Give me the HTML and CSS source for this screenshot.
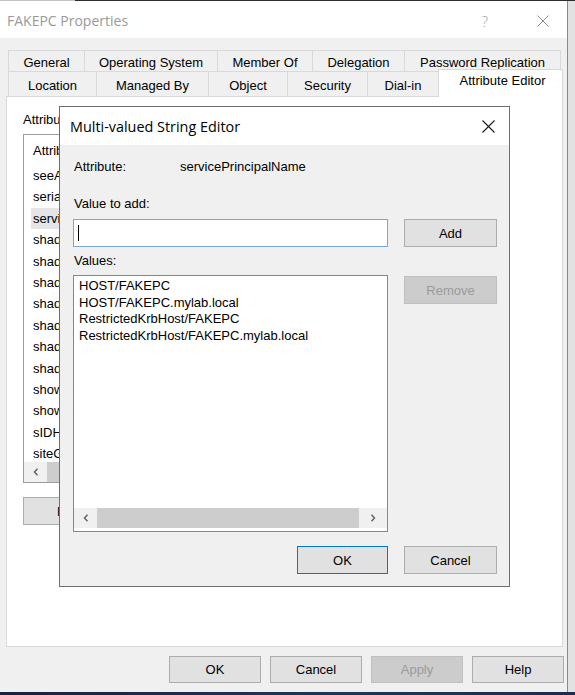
FILE: index.html
```html
<!DOCTYPE html>
<html>
<head>
<meta charset="utf-8">
<link rel="stylesheet" href="styles.css">
</head>
<body>
<div class="screen">
  <div class="topline"></div>
  <div class="main">
    <div class="window">
      <div class="titlebar">
        <span class="wtitle">FAKEPC Properties</span>
        <span class="capbtn help">?</span>
        <span class="capbtn close">
          <svg width="12" height="12" viewBox="0 0 12 12"><path d="M0.5 0.5 L11.5 11.5 M11.5 0.5 L0.5 11.5" stroke="#8e8e8e" stroke-width="1" fill="none"/></svg>
        </span>
      </div>
      <div class="tabs">
        <div class="tabrow back">
          <div class="tab t1">General</div>
          <div class="tab t2">Operating System</div>
          <div class="tab t3">Member Of</div>
          <div class="tab t4">Delegation</div>
          <div class="tab t5 last">Password Replication</div>
        </div>
        <div class="tabrow front">
          <div class="tab f1">Location</div>
          <div class="tab f2">Managed By</div>
          <div class="tab f3">Object</div>
          <div class="tab f4">Security</div>
          <div class="tab f5">Dial-in</div>
          <div class="tab f6 selected">Attribute Editor</div>
        </div>
      </div>
      <div class="panel">
        <div class="lbl">Attributes:</div>
        <div class="listview">
          <div class="lvhead">Attribute</div>
          <div class="lvitems">
            <div class="lvitem">seeAlso</div>
            <div class="lvitem">serialNumber</div>
            <div class="lvitem sel">servicePrincipalName</div>
            <div class="lvitem">shadowExpire</div>
            <div class="lvitem">shadowFlag</div>
            <div class="lvitem">shadowInactive</div>
            <div class="lvitem">shadowLastChange</div>
            <div class="lvitem">shadowMax</div>
            <div class="lvitem">shadowMin</div>
            <div class="lvitem">shadowWarning</div>
            <div class="lvitem">showInAddressBook</div>
            <div class="lvitem">showInAdvancedViewOnly</div>
            <div class="lvitem">sIDHistory</div>
            <div class="lvitem">siteGUID</div>
          </div>
          <div class="hscroll">
            <span class="arrow"><svg width="6" height="8" viewBox="0 0 6 8"><path d="M4.5 0.8 L1.5 4 L4.5 7.2" stroke="#606060" stroke-width="1.4" fill="none"/></svg></span>
            <span class="thumb wide"></span>
          </div>
        </div>
        <div class="backbtns">
          <div class="btn edit"><span class="editclip">E</span></div>
        </div>

        <div class="dialog">
          <div class="dtitlebar">
            <span class="dtitle">Multi-valued String Editor</span>
            <span class="dclose">
              <svg width="13" height="13" viewBox="0 0 13 13"><path d="M0.5 0.5 L12.5 12.5 M12.5 0.5 L0.5 12.5" stroke="#1a1a1a" stroke-width="1.1" fill="none"/></svg>
            </span>
          </div>
          <div class="dbody">
            <div class="arow">
              <span class="akey">Attribute:</span>
              <span class="aval">servicePrincipalName</span>
            </div>
            <div class="dlbl vadd">Value to add:</div>
            <div class="grid g1">
              <div class="input"><span class="caret"></span></div>
              <div class="btn">Add</div>
            </div>
            <div class="dlbl vals">Values:</div>
            <div class="grid g2">
              <div class="vlist">
                <div class="vitems">
                  <div class="vitem">HOST/FAKEPC</div>
                  <div class="vitem">HOST/FAKEPC.mylab.local</div>
                  <div class="vitem">RestrictedKrbHost/FAKEPC</div>
                  <div class="vitem">RestrictedKrbHost/FAKEPC.mylab.local</div>
                </div>
                <div class="hscroll vscr">
                  <span class="arrow"><svg width="6" height="8" viewBox="0 0 6 8"><path d="M4.5 0.8 L1.5 4 L4.5 7.2" stroke="#606060" stroke-width="1.4" fill="none"/></svg></span>
                  <span class="thumb"></span>
                  <span class="arrow right"><svg width="6" height="8" viewBox="0 0 6 8"><path d="M1.5 0.8 L4.5 4 L1.5 7.2" stroke="#606060" stroke-width="1.4" fill="none"/></svg></span>
                </div>
                <div class="vpad"></div>
              </div>
              <div class="btn disabled remove">Remove</div>
            </div>
            <div class="dfoot">
              <div class="btn default okd">OK</div>
              <div class="btn cancd">Cancel</div>
            </div>
          </div>
        </div>
      </div>
      <div class="footer">
        <div class="btn fbtn">OK</div>
        <div class="btn fbtn">Cancel</div>
        <div class="btn fbtn disabled">Apply</div>
        <div class="btn fbtn">Help</div>
      </div>
    </div>
    <div class="side"></div>
  </div>
  <div class="taskbar"></div>
</div>
</body>
</html>
```

FILE: styles.css
```css
* { box-sizing: border-box; }
html, body { margin: 0; padding: 0; }
body {
  width: 575px;
  height: 695px;
  overflow: hidden;
  font-family: "Liberation Sans", Arial, sans-serif;
  font-size: 13px;
  color: #000;
  background: #e4e4e4;
}
.screen { width: 575px; height: 695px; display: flex; flex-direction: column; }
.topline { height: 1px; flex: none; background: linear-gradient(to right, #c4c4c4 0, #c4c4c4 75px, #2c2c2c 75px); }
.main { flex: 1; display: flex; min-height: 0; }
.window {
  width: 568px;
  height: 691px;
  flex: none;
  background: #f0f0f0;
  border-right: 1px solid #8a8a8a;
  display: flex;
  flex-direction: column;
}
.side { flex: 1; background: #e2e2e2; }
.taskbar { height: 3px; flex: none; background: linear-gradient(to right, #17243c, #203659 60%, #1b2d4d); }

/* title bar */
.titlebar {
  height: 37px;
  flex: none;
  background: #fff;
  display: flex;
  align-items: center;
  padding-left: 7px;
  padding-right: 1px;
}
.wtitle { font-family: "Open Sans", "Noto Sans", sans-serif; font-size: 14px; color: #9a9a9a; margin-top: 2px; }
.capbtn { width: 46px; height: 30px; display: flex; align-items: center; justify-content: center; }
.help { margin-left: auto; font-family: "Open Sans", sans-serif; font-size: 15px; color: #a0a0a0; font-weight: 300; margin-top: 2px; }
.close { margin-left: 12px; margin-top: 2px; }

/* tabs */
.tabs { height: 58px; flex: none; padding-top: 12px; }
.tabrow { display: flex; align-items: flex-start; margin-left: 8px; }
.tabrow.back { height: 21px; }
.tabrow.front { height: 25px; }
.tab {
  border: 1px solid #d9d9d9;
  border-right: none;
  border-bottom: none;
  background: #f0f0f0;
  text-align: center;
  white-space: nowrap;
  flex: none;
}
.back .tab { height: 21px; line-height: 20px; padding-top: 2px; }
.front .tab { height: 25px; line-height: 24px; padding-top: 2px; }
.tab.last { border-right: 1px solid #d9d9d9; }
.t1 { width: 76px; }
.t2 { width: 133px; }
.t3 { width: 95px; }
.t4 { width: 92px; }
.t5 { width: 157px; }
.f1 { width: 88px; }
.f2 { width: 112px; }
.f3 { width: 79px; }
.f4 { width: 80px; }
.f5 { width: 71px; }
.front .tab.selected {
  width: 125px;
  height: 28px;
  margin-top: -2px;
  background: #fff;
  border-right: 1px solid #d9d9d9;
  position: relative;
  z-index: 2;
  line-height: 22px;
  padding-top: 0;
  padding-left: 4px;
}

/* panel */
.panel {
  position: relative;
  margin-left: 6px;
  width: 557px;
  height: 551px;
  flex: none;
  background: #fff;
  border: 1px solid #d9d9d9;
  padding: 15px 0 0 16px;
}
.lbl { line-height: 16px; width: 36px; overflow: hidden; white-space: nowrap; }
.listview {
  margin-top: 6px;
  width: 420px;
  height: 349px;
  border: 1px solid #9c9c9c;
  display: flex;
  flex-direction: column;
}
.lvhead { height: 30px; line-height: 31px; padding-left: 9px; flex: none; width: 35px; overflow: hidden; white-space: nowrap; }
.lvitems { flex: 1; overflow: hidden; width: 35px; }
.lvitem { height: 21.4px; line-height: 22px; padding-left: 9px; white-space: nowrap; overflow: hidden; }
.lvitem.sel { background: #e5e5e5; margin-left: 7px; padding-left: 2px; }
.hscroll { height: 20px; flex: none; display: flex; background: #f0f0f0; }
.hscroll .arrow { width: 23px; flex: none; display: flex; align-items: center; justify-content: center; }
.hscroll .thumb { background: #cdcdcd; flex: none; }
.hscroll .thumb.wide { width: 300px; }
.backbtns { margin-top: 14px; display: flex; }
.btn.edit { width: 88px; height: 28px; justify-content: flex-start; padding-left: 33px; }
.editclip { display: block; width: 3px; overflow: hidden; }

.btn {
  background: #e1e1e1;
  border: 1px solid #adadad;
  display: flex;
  align-items: center;
  justify-content: center;
  white-space: nowrap;
}
.btn.disabled { background: #cccccc; border-color: #bfbfbf; color: #9b9b9b; }
.btn.default { border-color: #0078d7; }

/* dialog */
.dialog {
  position: absolute;
  left: 52px;
  top: 9px;
  width: 451px;
  height: 481px;
  border: 1px solid #6e6e6e;
  background: #f0f0f0;
  z-index: 5;
  display: flex;
  flex-direction: column;
}
.dtitlebar {
  height: 38px;
  flex: none;
  background: #fff;
  display: flex;
  align-items: center;
  padding-left: 10px;
}
.dtitle { font-family: "Open Sans", "Noto Sans", sans-serif; font-size: 14.4px; color: #000; }
.dclose { margin-left: auto; margin-right: 14px; display: flex; }
.dbody { padding: 14px 12px 12px 13px; display: flex; flex-direction: column; }
.arow { display: flex; line-height: 16px; padding-left: 1px; }
.akey { width: 106px; }
.dlbl { line-height: 16px; padding-left: 1px; }
.vadd { margin-top: 21px; }
.vals { margin-top: 6px; }
.grid { display: grid; grid-template-columns: 315px 93px; column-gap: 16px; align-items: start; }
.g1 { margin-top: 7px; }
.g2 { margin-top: 6px; }
.input { height: 28px; background: #fff; border: 1px solid #7aa6d6; display: flex; align-items: center; padding-left: 4px; }
.caret { width: 1px; height: 16px; background: #000; }
.grid .btn { height: 28px; }
.remove { margin-top: 1px; }
.vlist { height: 257px; background: #fff; border: 1px solid #828790; display: flex; flex-direction: column; }
.vitems { flex: 1; padding: 2px 0 0 5px; }
.vitem { line-height: 16.5px; white-space: nowrap; }
.vscr .thumb { width: 262px; }
.vscr .arrow.right { flex: 1; width: auto; }
.vpad { height: 3px; flex: none; }
.dfoot { margin-top: 14px; display: flex; justify-content: flex-end; gap: 16px; }
.okd { width: 91px; height: 28px; }
.cancd { width: 93px; height: 28px; }

/* footer */
.footer { height: 45px; flex: none; display: flex; gap: 9px; padding: 9px 0 0 169px; }
.fbtn { width: 92px; height: 27px; }
```
